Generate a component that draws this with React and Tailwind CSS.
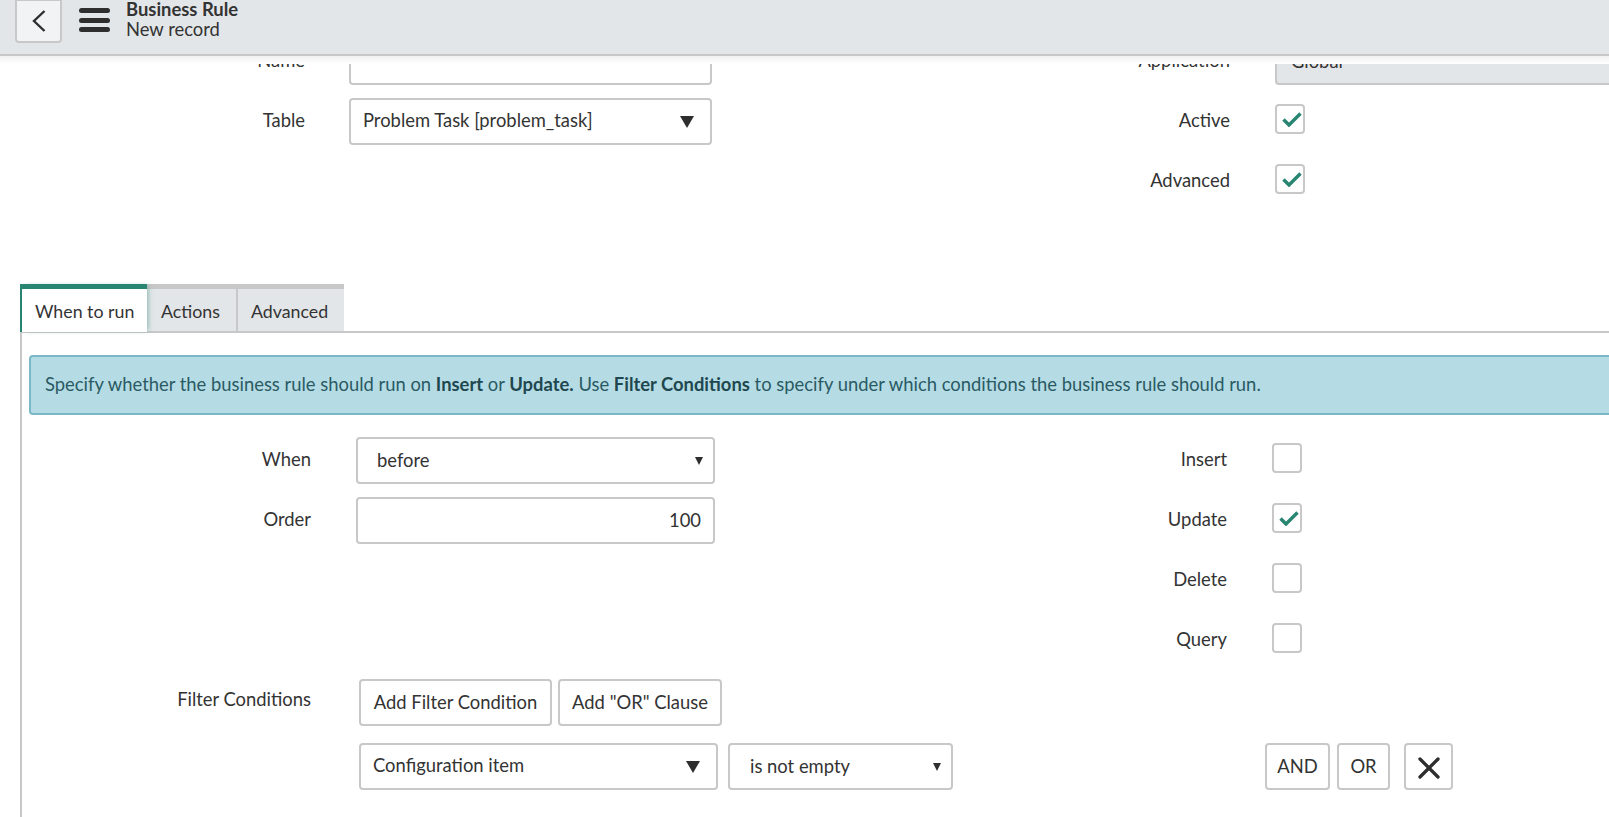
import { X } from "lucide-react";

const Arrow = ({ big }) => (
  <svg viewBox="0 0 14 12" className={big ? "w-[14px] h-[12px] flex-shrink-0" : "w-[8px] h-[8px] flex-shrink-0"} preserveAspectRatio="none">
    <polygon points="0,0 14,0 7,12" fill="#2e2e2e" />
  </svg>
);

const boxClass = "h-[47px] border-2 border-[#c8c8c8] rounded-[4px] bg-white flex items-center";

function Checkbox({ checked }) {
  return (
    <div className="w-[30px] h-[30px] border-2 border-[#c8c8c8] rounded-[4px] bg-white flex items-center justify-center">
      {checked && (
        <svg viewBox="0 0 20 15" className="w-[20px] h-[15px] ml-[3px] mt-[1px] flex-shrink-0" fill="none" stroke="#278571" strokeWidth="3.4">
          <polyline points="1.5,7.5 7,13 18.5,1.5" />
        </svg>
      )}
    </div>
  );
}

function CheckRow({ label, checked, width }) {
  return (
    <div className="flex h-[60px]">
      <div className={`${width} text-right leading-[44px]`}>{label}</div>
      <div className="ml-[45px] mt-[6px]"><Checkbox checked={checked} /></div>
    </div>
  );
}

function Field({ label, children }) {
  return (
    <div className="flex h-[60px]">
      <div className="w-[285px] text-right leading-[44px]">{label}</div>
      <div className="ml-[44px]">{children}</div>
    </div>
  );
}

export default function App() {
  return (
    <div className="h-[817px] w-full overflow-hidden flex flex-col bg-white text-[#333] text-[18.4px] font-[Lato,sans-serif]">
      {/* Top bar */}
      <header className="h-[56px] flex-shrink-0 bg-[#e3e6e9] border-b-2 border-[#c8c8c8] flex items-start pl-[15px] overflow-hidden">
        <button className="w-[47px] h-[44px] -mt-px bg-[#f1f3f4] border-2 border-[#c8c8c8] rounded-b-[4px] flex items-center justify-center">
          <svg viewBox="0 0 14 22" className="w-[14px] h-[22px]" fill="none" stroke="#2e2e2e" strokeWidth="2.4">
            <polyline points="12.5,1 2,11 12.5,21" />
          </svg>
        </button>
        <div className="ml-[17px] mt-[8px] w-[31px] flex flex-col gap-[4.5px]">
          <div className="h-[5px] rounded-full bg-[#2e2e2e]" />
          <div className="h-[5px] rounded-full bg-[#2e2e2e]" />
          <div className="h-[5px] rounded-full bg-[#2e2e2e]" />
        </div>
        <div className="ml-[16px] -mt-px leading-[20px]">
          <div className="font-bold">Business Rule</div>
          <div>New record</div>
        </div>
      </header>

      {/* Shadow strip under the bar */}
      <div className="h-[8px] flex-shrink-0 bg-gradient-to-b from-[#f1f1f1] to-white" />

      <div className="flex-1 overflow-hidden">
        <div className="-mt-[26px]">
          {/* Top of form */}
          <div className="flex h-[246px] pl-[24px]">
            <div className="w-[688px]">
              <Field label="Name">
                <div className={`${boxClass} w-[363px]`} />
              </Field>
              <Field label="Table">
                <div className={`${boxClass} w-[363px] pl-[12px] pr-[16px] justify-between`}>
                  <span className="-mt-[2px]">Problem Task [problem_task]</span>
                  <Arrow big />
                </div>
              </Field>
            </div>
            <div className="flex-1">
              <div className="flex h-[60px]">
                <div className="w-[518px] text-right leading-[44px]">Application</div>
                <div className="ml-[45px] flex-1 h-[47px] bg-[#e3e6e9] border-2 border-[#c8c8c8] border-r-0 rounded-l-[4px] pl-[14px] leading-[42px]">Global</div>
              </div>
              <CheckRow label="Active" checked width="w-[518px]" />
              <CheckRow label="Advanced" checked width="w-[518px]" />
            </div>
          </div>

          {/* Tabs */}
          <div className="ml-[20px]">
            <div className="flex h-[49px] border-b-2 border-[#c8c8c8] text-[17.8px]">
              <div className="w-[127px] h-[48px] bg-white border-t-[5px] border-l-2 border-[#278571] pl-[13px] leading-[44px] shadow-[3px_0_5px_-2px_rgba(39,133,113,0.5)] z-10">When to run</div>
              <div className="w-[91px] h-[47px] bg-[#e3e6e9] border-t-[5px] border-r-2 border-[#c8c8c8] pl-[14px] leading-[44px]">Actions</div>
              <div className="w-[106px] h-[47px] bg-[#e3e6e9] border-t-[5px] border-[#c8c8c8] pl-[13px] leading-[44px]">Advanced</div>
            </div>

            <div className="border-l-2 border-[#c8c8c8] pl-[7px] pt-[22px] h-[500px]">
              <div className="h-[60px] -mr-[10px] bg-[#b5dce5] border-2 border-[#7ab8c8] rounded-l-[4px] pl-[14px] leading-[54px] text-[#2a5a63]">
                Specify whether the business rule should run on <b className="text-[#1f474f]">Insert</b> or <b className="text-[#1f474f]">Update.</b> Use <b className="text-[#1f474f]">Filter Conditions</b> to specify under which conditions the business rule should run.
              </div>

              <div className="flex mt-[22px] h-[242px]">
                <div className="w-[686px]">
                  <div className="flex h-[60px]">
                    <div className="w-[282px] text-right leading-[44px]">When</div>
                    <div className={`${boxClass} ml-[45px] w-[359px] pl-[19px] pr-[10px] justify-between`}>
                      <span>before</span>
                      <Arrow />
                    </div>
                  </div>
                  <div className="flex h-[60px]">
                    <div className="w-[282px] text-right leading-[44px]">Order</div>
                    <div className={`${boxClass} ml-[45px] w-[359px] pr-[12px] justify-end`}>100</div>
                  </div>
                </div>
                <div className="flex-1">
                  <CheckRow label="Insert" width="w-[512px]" />
                  <CheckRow label="Update" checked width="w-[512px]" />
                  <CheckRow label="Delete" width="w-[512px]" />
                  <CheckRow label="Query" width="w-[512px]" />
                </div>
              </div>

              {/* Filter conditions */}
              <div className="flex">
                <div className="w-[282px] text-right leading-[40px]">Filter Conditions</div>
                <div className="ml-[48px] flex flex-col gap-[17px]">
                  <div className="flex gap-[6px]">
                    <button className={`${boxClass} w-[193px] justify-center`}>Add Filter Condition</button>
                    <button className={`${boxClass} w-[164px] justify-center`}>Add "OR" Clause</button>
                  </div>
                  <div className="flex">
                    <div className={`${boxClass} w-[359px] pl-[12px] pr-[16px] justify-between`}>
                      <span className="-mt-[2px]">Configuration item</span>
                      <Arrow big />
                    </div>
                    <div className={`${boxClass} ml-[10px] w-[225px] pl-[20px] pr-[10px] justify-between`}>
                      <span>is not empty</span>
                      <Arrow />
                    </div>
                    <button className={`${boxClass} ml-[312px] w-[65px] justify-center`}>AND</button>
                    <button className={`${boxClass} ml-[7px] w-[53px] justify-center`}>OR</button>
                    <button className={`${boxClass} ml-[14px] w-[49px] justify-center`}>
                      <X size={36} strokeWidth={2.2} className="text-[#2e2e2e] mt-[3px] flex-shrink-0" />
                    </button>
                  </div>
                </div>
              </div>
            </div>
          </div>
        </div>
      </div>
    </div>
  );
}
